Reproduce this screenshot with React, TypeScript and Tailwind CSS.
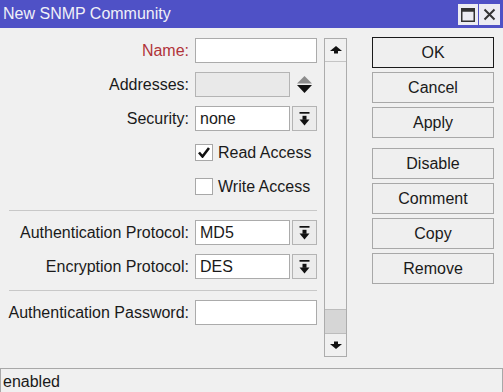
import React from "react";

const font = { fontFamily: '"Liberation Sans", Arial, sans-serif' };

function DropIcon() {
  return (
    <svg width="11" height="14" viewBox="0 0 11 14">
      <rect x="0.5" y="0" width="10" height="1.7" fill="#111" />
      <rect x="3.5" y="3.8" width="4" height="4" fill="#111" />
      <polygon points="0.5,7.6 10.5,7.6 5.5,13.5" fill="#111" />
    </svg>
  );
}

function Row({ label, red, children }: { label: string; red?: boolean; children: React.ReactNode }) {
  return (
    <div className="flex items-center h-[25px]">
      <div className={`w-[189px] text-right whitespace-nowrap ${red ? "text-[#b0343a]" : "text-[#1a1a1a]"}`}>{label}</div>
      <div className="ml-[6px] flex h-full">{children}</div>
    </div>
  );
}

function Select({ value }: { value: string }) {
  return (
    <>
      <div className="w-[95px] h-full bg-white border border-[#ababab] flex items-center px-[4px] text-[#1a1a1a]">{value}</div>
      <div className="ml-[2px] w-[25px] h-full border border-[#b4b4b4] bg-[#ececec] flex items-center justify-center">
        <DropIcon />
      </div>
    </>
  );
}

function Check({ checked, label }: { checked?: boolean; label: string }) {
  return (
    <div className="flex items-center h-[25px] pl-[195px]">
      <div className="w-[18px] h-[17px] bg-white border border-[#a8a8a8] flex items-center justify-center">
        {checked && (
          <svg width="12" height="11" viewBox="0 0 12 11">
            <path d="M1 5.5 L4.5 9.5 L11 1" stroke="#111" strokeWidth="2.6" fill="none" />
          </svg>
        )}
      </div>
      <div className="ml-[5px] text-[#1a1a1a]">{label}</div>
    </div>
  );
}

function Btn({ label, primary }: { label: string; primary?: boolean }) {
  return (
    <div
      className={`w-[122px] h-[31px] flex items-center justify-center bg-[#efefef] border text-[#1a1a1a] ${
        primary ? "border-[#1a1a1a]" : "border-[#a8a8a8]"
      }`}
    >
      {label}
    </div>
  );
}

export default function App() {
  return (
    <div className="w-[503px] h-[392px] bg-[#f0f0f0] flex flex-col overflow-hidden text-[16px]" style={font}>
      <div className="h-[28px] bg-[#4f51c6] flex items-center justify-between pl-[3px] pr-[3px]">
        <span className="text-[#f0f0f8] text-[16px]">New SNMP Community</span>
        <div className="flex gap-[1px] mt-[1px]">
          <div className="w-[20px] h-[21px] bg-[#ececf2] flex items-center justify-center">
            <svg width="14" height="14" viewBox="0 0 14 14">
              <rect x="0.75" y="0.75" width="12.5" height="12.5" stroke="#333" strokeWidth="1.5" fill="none" />
              <rect x="0.75" y="0.75" width="12.5" height="3" fill="#333" />
            </svg>
          </div>
          <div className="w-[21px] h-[21px] bg-[#ececf2] flex items-center justify-center">
            <svg width="13" height="13" viewBox="0 0 13 13">
              <path d="M1.5 1.5 L11.5 11.5 M11.5 1.5 L1.5 11.5" stroke="#333" strokeWidth="2" />
            </svg>
          </div>
        </div>
      </div>

      <div className="h-[340px] flex">
        <div className="w-[317px] pt-[10px] flex flex-col">
          <Row label="Name:" red>
            <div className="w-[122px] h-full bg-white border border-[#ababab]" />
          </Row>
          <div className="mt-[9px]">
            <Row label="Addresses:">
              <div className="w-[95px] h-full bg-[#e9e9e9] border border-[#b4b4b4]" />
              <div className="ml-[2px] w-[25px] h-full flex items-center justify-center">
                <svg width="15" height="18" viewBox="0 0 15 18">
                  <polygon points="0,7.5 7.5,0 15,7.5" fill="#8c8c8c" />
                  <polygon points="0,9 15,9 7.5,17" fill="#111" />
                </svg>
              </div>
            </Row>
          </div>
          <div className="mt-[9px]">
            <Row label="Security:">
              <Select value="none" />
            </Row>
          </div>
          <div className="mt-[9px]">
            <Check checked label="Read Access" />
          </div>
          <div className="mt-[9px]">
            <Check label="Write Access" />
          </div>
          <div className="mt-[11px] ml-[9px] w-[308px] h-px bg-[#c8c8c8]" />
          <div className="mt-[9px]">
            <Row label="Authentication Protocol:">
              <Select value="MD5" />
            </Row>
          </div>
          <div className="mt-[9px]">
            <Row label="Encryption Protocol:">
              <Select value="DES" />
            </Row>
          </div>
          <div className="mt-[11px] ml-[9px] w-[308px] h-px bg-[#c8c8c8]" />
          <div className="mt-[9px]">
            <Row label="Authentication Password:">
              <div className="w-[122px] h-full bg-white border border-[#ababab]" />
            </Row>
          </div>
        </div>

        <div className="ml-[7px] mt-[10px] w-[23px] h-[319px] border border-[#acacac] flex flex-col">
          <div className="h-[23px] border-b border-[#c4c4c4] flex items-center justify-center">
            <svg width="12" height="8" viewBox="0 0 12 8">
              <polygon points="0,5 6,0 12,5" fill="#111" />
              <rect x="4" y="5" width="4" height="2.5" fill="#111" />
            </svg>
          </div>
          <div className="flex-1" />
          <div className="h-[25px] bg-[#d6d6d6] border-t border-b border-[#bcbcbc]" />
          <div className="h-[22px] flex items-center justify-center">
            <svg width="12" height="8" viewBox="0 0 12 8">
              <rect x="4" y="0.5" width="4" height="2.5" fill="#111" />
              <polygon points="0,3 12,3 6,8" fill="#111" />
            </svg>
          </div>
        </div>

        <div className="ml-[25px] mt-[9px] flex flex-col">
          <Btn label="OK" primary />
          <div className="mt-[4px]"><Btn label="Cancel" /></div>
          <div className="mt-[4px]"><Btn label="Apply" /></div>
          <div className="mt-[10px]"><Btn label="Disable" /></div>
          <div className="mt-[4px]"><Btn label="Comment" /></div>
          <div className="mt-[4px]"><Btn label="Copy" /></div>
          <div className="mt-[4px]"><Btn label="Remove" /></div>
        </div>
      </div>

      <div className="h-[24px] border-t border-l border-r border-[#a8a8a8] flex items-center pl-[2px] pt-[2px] text-[#1a1a1a]">
        enabled
      </div>
    </div>
  );
}
